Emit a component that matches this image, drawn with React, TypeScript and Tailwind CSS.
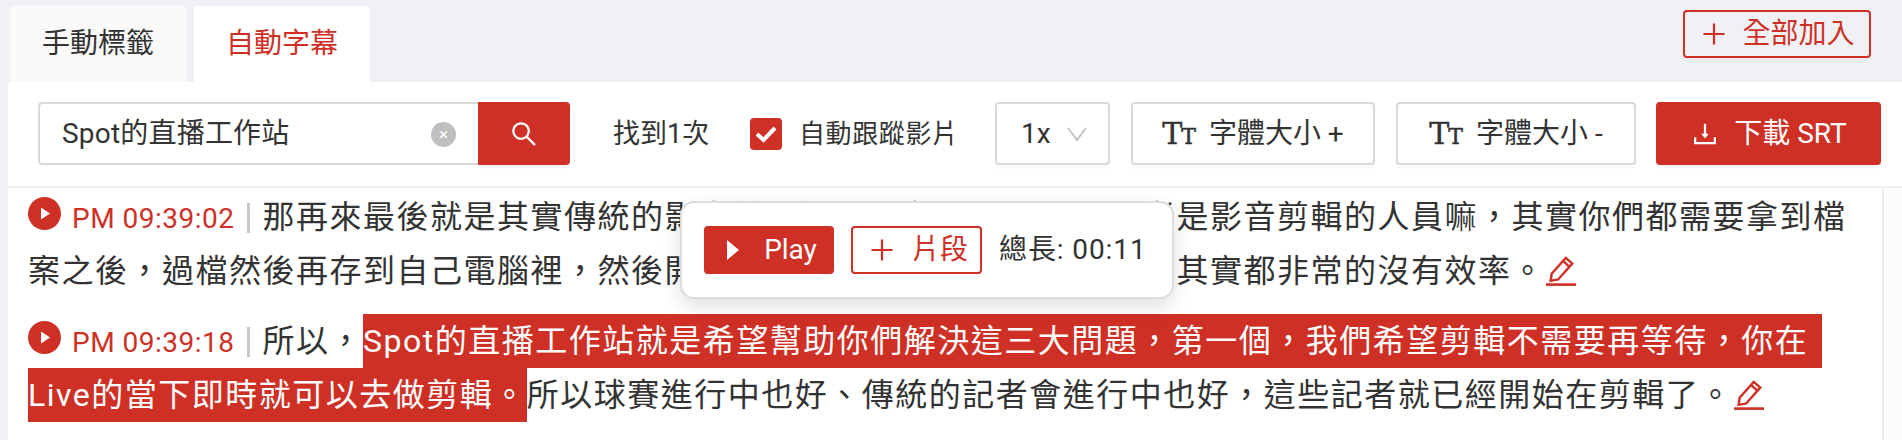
import { AiOutlineSearch, AiOutlinePlus, AiOutlineDownload } from 'react-icons/ai';

const FONT = "font-['Roboto','Noto_Sans_CJK_TC',sans-serif]";

function PlayDot() {
    return (
        <svg viewBox="0 0 33 33" className="inline-block w-[33px] h-[33px] mr-[11px] align-[-2px]">
            <circle cx="16.5" cy="16.5" r="16.5" fill="#cf3026" />
            <path d="M13 10.5 L22 16.5 L13 22.5 Z" fill="#fff" />
        </svg>
    );
}

function EditIcon() {
    return (
        <svg viewBox="0 0 32 32" fill="none" stroke="#cf3026" className="inline-block w-[30px] h-[30px] ml-[1px] align-[-4px]">
            <path d="M21 2 L28 8 L13 25 L5 26.5 L6 19 Z M18.5 5.5 L25 11.5" strokeWidth="2.6" strokeLinejoin="miter" />
            <path d="M0 30.5 H32" strokeWidth="2.8" />
        </svg>
    );
}

function TtIcon() {
    return (
        <span className="flex items-baseline font-['DejaVu_Serif',serif] [-webkit-text-stroke:0.5px_#333] text-[#333] leading-none mr-[13px]">
            <span className="text-[30px]">T</span>
            <span className="text-[22px] -ml-[1px]">T</span>
        </span>
    );
}

function TimeStamp({ time }: { time: string }) {
    return (
        <>
            <PlayDot />
            <span className="text-[28px] tracking-[0.5px] text-[#cf3026]">{time}</span>
            <span className="inline-block w-[3px] h-[30px] bg-[#c8c8c8] ml-[12px] mr-[13px] align-[-5px]" />
        </>
    );
}

export default function App() {
    const sizeBtn = "h-[63px] flex items-center justify-center pt-[1px] bg-white border-2 border-[#d9d9d9] rounded-[4px] text-[28px] text-[#333] shadow-[0_4px_0_rgba(0,0,0,0.02)]";

    return (
        <div className={`${FONT} w-[1902px] h-[440px] overflow-hidden bg-[#f0f1f5] text-[#333]`}>
            {/* Tabs */}
            <div className="h-[82px] flex justify-between pl-[10px] pr-[31px]">
                <div className="flex gap-[8px] pt-[6px]">
                    <div className="w-[176px] h-[76px] flex items-center justify-center bg-[#fafafa] rounded-t-[4px] text-[28px] text-[#333]">手動標籤</div>
                    <div className="w-[176px] h-[76px] flex items-center justify-center bg-white rounded-t-[4px] text-[28px] text-[#cf3026]">自動字幕</div>
                </div>
                <button className="mt-[10px] w-[188px] h-[48px] flex items-center justify-center border-2 border-[#cf3026] rounded-[4px] text-[28px] text-[#cf3026] shadow-[0_4px_0_rgba(0,0,0,0.02)]">
                    <AiOutlinePlus className="text-[30px] mr-[13px]" />
                    全部加入
                </button>
            </div>

            <div className="ml-[8px] h-[358px] bg-white rounded-tl-[4px]">
                {/* Toolbar */}
                <div className="h-[104px] flex items-start pt-[20px] pl-[30px]">
                    <div className="w-[440px] h-[63px] flex items-center pt-[1px] bg-white border-2 border-r-0 border-[#d9d9d9] rounded-l-[4px] pl-[22px] pr-[22px]">
                        <span className="flex-1 text-[28px] tracking-[0.2px] text-[#333]">Spot的直播工作站</span>
                        <span className="w-[25px] h-[25px] flex items-center justify-center rounded-full bg-[#bfbfbf] text-white text-[17px] leading-none">×</span>
                    </div>
                    <div className="w-[92px] h-[63px] flex items-center justify-center bg-[#cf3026] rounded-r-[4px] text-white shadow-[0_4px_0_rgba(0,0,0,0.02)]">
                        <AiOutlineSearch className="text-[30px]" />
                    </div>
                    <span className="ml-[43px] w-[137px] h-[63px] flex items-center pt-[1px] text-[27px]">找到1次</span>
                    <span className="w-[245px] h-[63px] flex items-center">
                        <span className="w-[32px] h-[32px] flex items-center justify-center bg-[#cf3026] rounded-[4px]">
                            <svg viewBox="0 0 32 32" className="w-[32px] h-[32px]" fill="none" stroke="#fff" strokeWidth="4">
                                <path d="M7 16 L13.5 22 L25 10" />
                            </svg>
                        </span>
                        <span className="ml-[17px] pt-[1px] text-[26px] tracking-[0.6px] whitespace-nowrap">自動跟蹤影片</span>
                    </span>
                    <div className="w-[115px] h-[63px] flex items-center pt-[1px] bg-white border-2 border-[#d9d9d9] rounded-[4px] pl-[24px] text-[28px] shadow-[0_4px_0_rgba(0,0,0,0.02)]">
                        1x
                        <svg viewBox="0 0 20 14" className="ml-[16px] w-[20px] h-[14px]" fill="none" stroke="#c4c4c4" strokeWidth="2">
                            <path d="M1 1 L10 13 L19 1" />
                        </svg>
                    </div>
                    <button className={`ml-[21px] w-[244px] ${sizeBtn}`}>
                        <TtIcon />
                        字體大小 +
                    </button>
                    <button className={`ml-[21px] w-[240px] ${sizeBtn}`}>
                        <TtIcon />
                        字體大小 -
                    </button>
                    <button className="ml-[20px] w-[225px] h-[63px] flex items-center justify-center pt-[1px] bg-[#cf3026] rounded-[4px] text-[28px] text-white shadow-[0_4px_0_rgba(0,0,0,0.02)]">
                        <AiOutlineDownload className="text-[30px] mr-[14px]" />
                        下載 SRT
                    </button>
                </div>

                {/* Transcript */}
                <div className="relative h-[254px] flex border-t-2 border-[#f0f0f0]">
                    <div className="w-[1874px] pt-[3px] pl-[20px] pr-[20px] text-[32px] leading-[53px] tracking-[1.5px] text-[#333]">
                        <p className="mb-[17px]">
                            <TimeStamp time="PM 09:39:02" />
                            那再來最後就是其實傳統的影音剪輯師，影音後製人員， 或者是影音剪輯的人員嘛，其實你們都需要拿到檔案之後，過檔然後再存到自己電腦裡，然後開始進行剪輯，這樣子的 工作流程其實都非常的沒有效率。
                            <EditIcon />
                        </p>
                        <p>
                            <TimeStamp time="PM 09:39:18" />
                            所以，
                            <span className="bg-[#cf3026] text-white py-[8px] pr-[14px]">Spot的直播工作站就是希望幫助你們解決這三大問題，第一個，我們希望剪輯不需要再等待，你在</span>
                            <span className="bg-[#cf3026] text-white py-[8px]">Live的當下即時就可以去做剪輯。</span>
                            所以球賽進行中也好、傳統的記者會進行中也好，這些記者就已經開始在剪輯了。
                            <EditIcon />
                        </p>
                    </div>
                    <div className="flex-1 border-l-2 border-[#ececec] bg-[#fcfcfc]" />

                    {/* Selection popup */}
                    <div className="absolute left-[672px] top-[13px] w-[494px] h-[98px] flex items-center pl-[22px] bg-white border-2 border-[#dcdcdc] rounded-[14px] shadow-[0_8px_20px_rgba(0,0,0,0.12)]">
                        <button className="w-[130px] h-[48px] flex items-center justify-center pl-[6px] bg-[#cf3026] rounded-[4px] text-[28px] text-white shadow-[0_4px_0_rgba(0,0,0,0.02)]">
                            <svg viewBox="0 0 12 20" className="w-[12px] h-[20px] mr-[25px]" fill="#fff">
                                <path d="M0 0 L12 10 L0 20 Z" />
                            </svg>
                            Play
                        </button>
                        <button className="ml-[17px] w-[131px] h-[48px] flex items-center justify-center pl-[2px] bg-white border-2 border-[#cf3026] rounded-[4px] text-[28px] text-[#cf3026] shadow-[0_4px_0_rgba(0,0,0,0.02)]">
                            <AiOutlinePlus className="text-[30px] mr-[15px]" />
                            片段
                        </button>
                        <span className="ml-[17px] text-[28px] tracking-[0.9px] text-[#333] whitespace-nowrap">總長: 00:11</span>
                    </div>
                </div>
            </div>
        </div>
    );
}
